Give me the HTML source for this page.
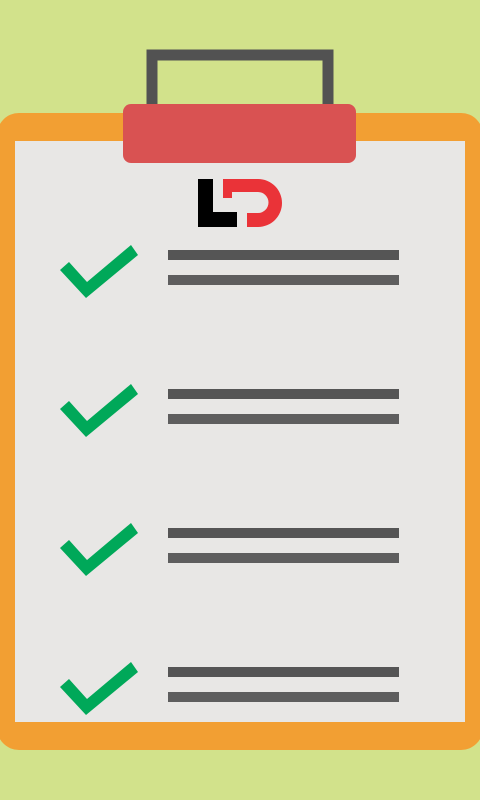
<!DOCTYPE html>
<html><head><style>
html,body{margin:0;padding:0;width:480px;height:800px;overflow:hidden;background:#d2e28b}
</style></head><body>
<svg width="480" height="800" viewBox="0 0 480 800" xmlns="http://www.w3.org/2000/svg">
<rect width="480" height="800" fill="#d2e28b"/>
<rect x="-3" y="113" width="486" height="637" rx="22" fill="#f29f33"/>
<rect x="15" y="141" width="450" height="581" fill="#e8e7e5"/>
<path d="M152 105 V55 H328 V105" fill="none" stroke="#525252" stroke-width="11"/>
<rect x="123" y="104" width="233" height="59" rx="8" fill="#d95252"/>
<path d="M198 179 H213 V212 H237 V227 H198 Z" fill="#000"/>
<path d="M223 179 H258 A24 24 0 0 1 258 227 H247 V213 H258 A10.5 10.5 0 0 0 258 192 H232 V198 H223 Z" fill="#ea3338"/>
<g id="row">
<polygon points="69,262 87,282 131,245 138,255 86,298 60,270" fill="#00a859"/>
<rect x="168" y="250" width="231" height="10" fill="#555"/>
<rect x="168" y="275" width="231" height="10" fill="#5e5e5e"/>
</g>
<use href="#row" transform="translate(0,139)"/>
<use href="#row" transform="translate(0,278)"/>
<use href="#row" transform="translate(0,417)"/>
</svg>
</body></html>
